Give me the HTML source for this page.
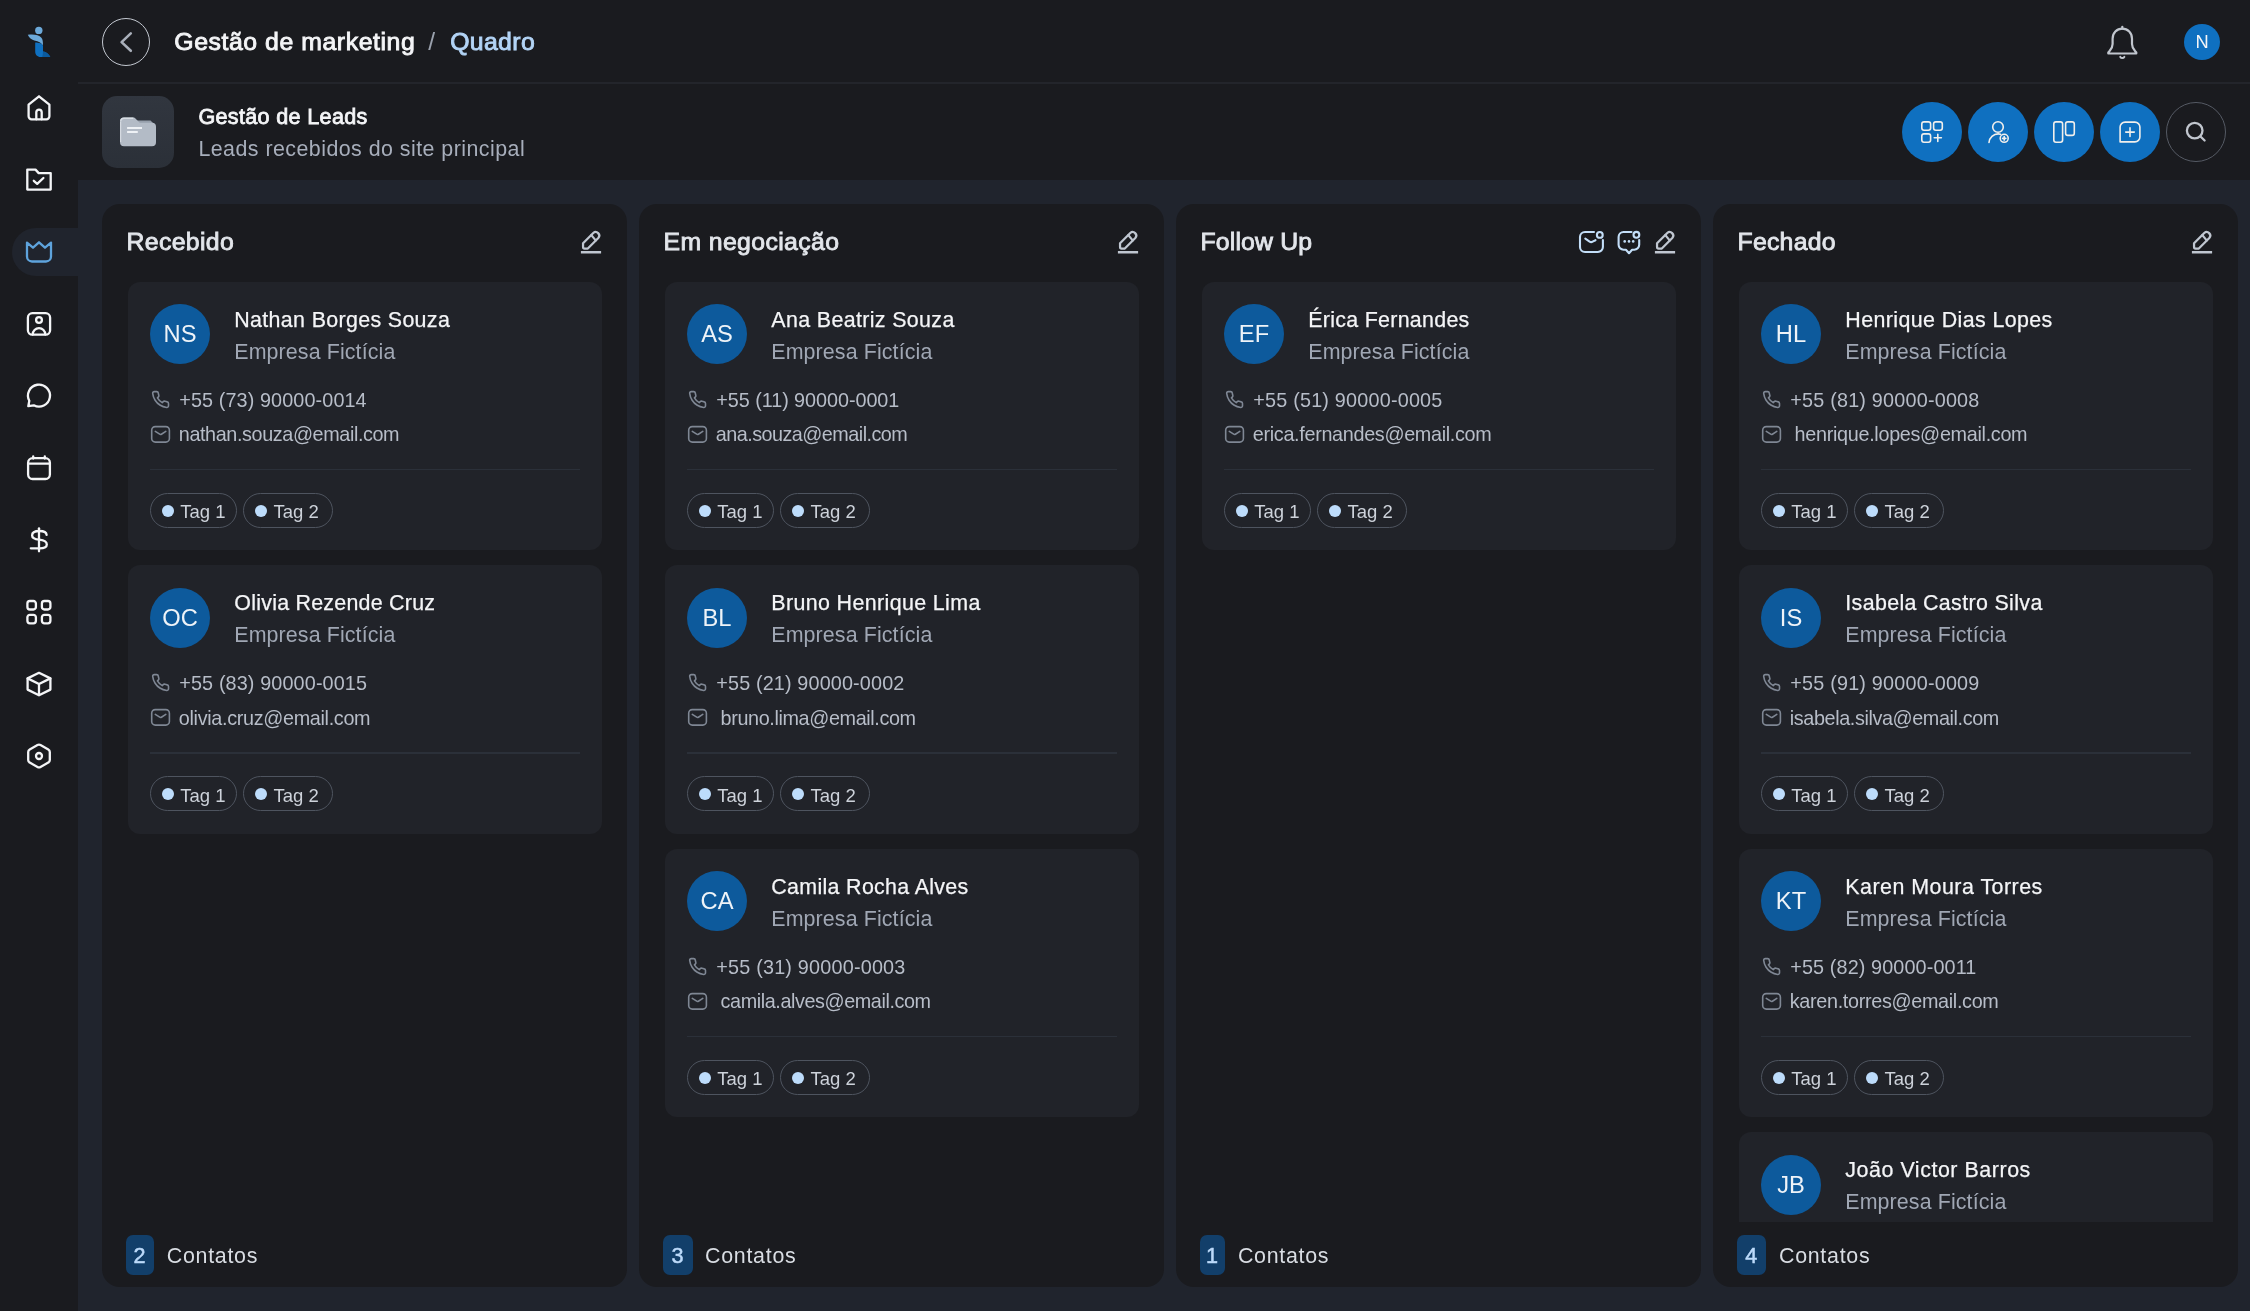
<!DOCTYPE html><html><head><meta charset="utf-8"><title>Quadro</title><style>
*{box-sizing:border-box;margin:0;padding:0}
html,body{width:2250px;height:1311px;overflow:hidden;background:#20242d;
 font-family:"Liberation Sans",sans-serif;-webkit-font-smoothing:antialiased}
.abs{position:absolute}
#app{position:absolute;left:0;top:0;width:2250px;height:1311px;will-change:transform}
#side{position:absolute;left:0;top:0;width:78px;height:1311px;background:#1a1b1f}
#top{position:absolute;left:78px;top:0;width:2172px;height:180px;background:#1a1b1f}
#hline{position:absolute;left:78px;top:82.4px;width:2172px;height:1.5px;background:#23252b}
.t{position:absolute;white-space:nowrap;line-height:1;transform:translateY(-100%);display:block}
svg{position:absolute;overflow:visible}
.col{position:absolute;top:204px;width:525px;height:1083px;background:#1a1b1f;border-radius:18px;overflow:hidden}
.card{position:absolute;left:25.5px;width:474px;height:268.5px;background:#212329;border-radius:12px}
.av{position:absolute;left:22.5px;top:22.8px;width:60px;height:60px;border-radius:50%;background:#0d5a9c}
  .div{position:absolute;left:22px;top:187px;width:430.5px;height:1.5px;background:#2b3039}
.tag{position:absolute;top:211.4px;height:35px;border:1.5px solid #4e545f;border-radius:17.5px}
.dot{position:absolute;top:10.7px;left:10.5px;width:12px;height:12px;border-radius:50%;background:#bddcfb}
.scroll{position:absolute;left:0;top:0;width:525px;height:1018px;overflow:hidden}
.badge{position:absolute;left:24px;top:1030.5px;width:29.5px;height:40.5px;border-radius:7px;background:#123f6a}
.btn{position:absolute;top:102px;width:60px;height:60px;border-radius:50%;background:#0f70c0}
.h1{font-size:24.8px;font-weight:normal;color:#f4f5f7;margin-top:4.81px}
.h1s{font-size:24.6px;font-weight:normal;color:#9aa1ad;margin-top:4.78px}
.h1q{font-size:24.8px;font-weight:normal;color:#b3d4f6;margin-top:4.81px}
.sub1{font-size:21.6px;font-weight:normal;color:#f4f5f7;margin-top:4.32px}
.sub2{font-size:21.4px;font-weight:normal;color:#a7aebb;margin-top:4.28px}
.ct{font-size:24.8px;font-weight:normal;color:#e3e6eb;margin-top:4.81px}
.nm{font-size:21.4px;font-weight:normal;color:#f4f5f7;margin-top:4.28px}
.co{font-size:21.4px;font-weight:normal;color:#a0a7b4;margin-top:4.28px}
.ph{font-size:19.8px;font-weight:normal;color:#b7bdc8;margin-top:4.04px}
.tg{font-size:18.5px;font-weight:normal;color:#cdd2da;margin-top:3.84px}
.ini{font-size:23.7px;font-weight:normal;color:#eef3f8;margin-top:4.64px}
.bd{font-size:21.6px;font-weight:normal;color:#bcdafa;margin-top:4.32px}
.ft{font-size:21.4px;font-weight:normal;color:#d9dde3;margin-top:4.28px}
.nav{font-size:18.3px;font-weight:normal;color:#f4f5f7;margin-top:3.81px}
.nm{-webkit-text-stroke:0.25px #f4f5f7}
.ct{-webkit-text-stroke:0.85px #e3e6eb}
.h1{-webkit-text-stroke:0.9px #f4f5f7}
.h1q{-webkit-text-stroke:0.9px #b3d4f6}
.sub1{-webkit-text-stroke:0.8px #f4f5f7}
.bd{-webkit-text-stroke:0.5px #bcdafa}
</style></head><body>
<div id="side"></div><div id="top"></div><div id="hline"></div><div id="app">
<!-- logo -->
<svg style="left:20px;top:20px" width="40" height="44" viewBox="20 20 40 44">
 <path d="M35.2 42.5c0 0 7.8 0 7.8 3.5v5.5c0 0 4.500 0.300 7.300 5.400H40.500c-3.200 0-5.300-2.300-5.300-5.500Z" fill="#0f70c0"/>
 <path d="M43 51.500c3 0.300 5.800 2.200 7.300 5.400H42.200c0.500-1.700 0.800-3.600 0.800-5.400Z" fill="#0b5a9d"/>
 <path d="M27.800 34.800c5.800-0.700 11.200 0 13.600 2.900 1.300 1.600 1.600 4.100 1.600 7.500-3-3.600-6.200-4.300-8.700-4.800-3.300-0.800-5.500-3-6.500-5.600Z" fill="#6ca9d9"/>
 <circle cx="38.800" cy="30.400" r="3.700" fill="#6ca9d9"/>
</svg>
<!-- active pill -->
<div class="abs" style="left:12px;top:228px;width:70px;height:48px;background:#20242d;border-radius:24px 0 0 24px"></div>
<!-- home -->
<svg style="left:21px;top:90px" width="36" height="36" viewBox="-18 -18 36 36" fill="none" stroke="#f4f5f7" stroke-width="2.3" stroke-linejoin="round" stroke-linecap="round">
 <path d="M0-11.700 10.400-3.400V8.300a3 3 0 0 1-3 3H-7.400a3 3 0 0 1-3-3V-3.400Z"/><path d="M-2.700 11.300V4.300a2.700 2.700 0 0 1 5.400 0v7"/></svg>
<!-- folder check -->
<svg style="left:21px;top:162px" width="36" height="36" viewBox="-18 -18 36 36" fill="none" stroke="#f4f5f7" stroke-width="2.3" stroke-linejoin="round" stroke-linecap="round">
 <path d="M-11.700-10.400H-3.500L-0.300-6.900H11.700V9.600H-11.700Z"/><path d="M-5.200 0.800-1.800 3.900 4.400-2"/></svg>
<!-- crown (active) -->
<svg style="left:21px;top:234px" width="36" height="36" viewBox="-18 -18 36 36" fill="none" stroke="#5ea3dc" stroke-width="2.3" stroke-linejoin="round" stroke-linecap="round">
 <path d="M-12-9.400-6-4.300 0-9.700 6-4.300 12-9.400V4.500a5 5 0 0 1-5 5H-7a5 5 0 0 1-5-5Z"/></svg>
<!-- user square -->
<svg style="left:21px;top:306px" width="36" height="36" viewBox="-18 -18 36 36" fill="none" stroke="#f4f5f7" stroke-width="2.3" stroke-linejoin="round" stroke-linecap="round">
 <rect x="-11.100" y="-10.800" width="22.200" height="21.500" rx="4.500"/><circle cx="0" cy="-4" r="2.900"/><path d="M-6.300 10.500a6.300 6.300 0 0 1 12.600 0"/></svg>
<!-- chat -->
<svg style="left:21px;top:378px" width="36" height="36" viewBox="-18 -18 36 36" fill="none" stroke="#f4f5f7" stroke-width="2.3" stroke-linejoin="round" stroke-linecap="round">
 <path d="M-5.200 9.300A11 11 0 1 0-9.700 4.800L-10.700 10.200Z"/></svg>
<!-- calendar -->
<svg style="left:21px;top:450px" width="36" height="36" viewBox="-18 -18 36 36" fill="none" stroke="#f4f5f7" stroke-width="2.3" stroke-linejoin="round" stroke-linecap="round">
 <rect x="-10.900" y="-9.800" width="21.800" height="20.800" rx="4.500"/><path d="M-10.900-4.300H10.900M-5.800-11.600v2.200M5.800-11.600v2.200"/></svg>
<!-- dollar -->
<svg style="left:21px;top:522px" width="36" height="36" viewBox="-18 -18 36 36" fill="none" stroke="#f4f5f7" stroke-width="2.300" stroke-linejoin="round" stroke-linecap="round">
 <path d="M0-11.700V11.300"/><path d="M7.600-5.200C7.400-8 4.600-9 0.500-9 -4-9-6.900-7.400-6.900-4.600-6.900-1.600-3.800-0.800 0.300-0.300 4.400 0.200 7.800 1.500 7.800 4.500 7.800 7.400 4.800 8.300 0.500 8.300H-8.200"/></svg>
<!-- grid -->
<svg style="left:21px;top:594px" width="36" height="36" viewBox="-18 -18 36 36" fill="none" stroke="#f4f5f7" stroke-width="2.300" stroke-linejoin="round">
 <rect x="-11.600" y="-11" width="8.500" height="8.500" rx="2.500"/><rect x="2.900" y="-11" width="8.500" height="8.500" rx="2.500"/><rect x="-11.600" y="2.800" width="8.500" height="8.500" rx="2.500"/><rect x="2.900" y="2.800" width="8.500" height="8.500" rx="2.500"/></svg>
<!-- box -->
<svg style="left:21px;top:666px" width="36" height="36" viewBox="-18 -18 36 36" fill="none" stroke="#f4f5f7" stroke-width="2.300" stroke-linejoin="round" stroke-linecap="round">
 <path d="M0-11.200 11.400-5.600V5.600L0 11.200-11.400 5.600V-5.600Z"/><path d="M-11.400-5.600 0 0 11.400-5.600M0 0V11.200"/></svg>
<!-- settings hex -->
<svg style="left:21px;top:738px" width="36" height="36" viewBox="-18 -18 36 36" fill="none" stroke="#f4f5f7" stroke-width="2.300" stroke-linejoin="round" stroke-linecap="round">
 <path d="M-1.500-11 -9.300-6.600a3 3 0 0 0-1.500 2.600V4a3 3 0 0 0 1.500 2.600L-1.500 11a3 3 0 0 0 3 0L9.300 6.600A3 3 0 0 0 10.800 4V-4A3 3 0 0 0 9.300-6.600L1.500-11a3 3 0 0 0-3 0Z"/><circle cx="0" cy="0" r="3"/></svg>
<!-- back button -->
<div class="abs" style="left:102px;top:18px;width:48px;height:48px;border-radius:50%;border:1.6px solid #c4c9d1"></div>
<svg style="left:102px;top:18px" width="48" height="48" viewBox="102 18 48 48" fill="none" stroke="#a9afba" stroke-width="2.600" stroke-linecap="round" stroke-linejoin="round"><path d="M130.800 33.400 121.600 42.100 130.800 50.800"/></svg>
<!-- bell -->
<svg style="left:2100px;top:20px" width="44" height="44" viewBox="2100 20 44 44" fill="none" stroke="#c1c6ce" stroke-width="2.200" stroke-linecap="round" stroke-linejoin="round">
 <path d="M2122.300 26.800v1.800"/>
 <path d="M2122.300 28.700c-5.600 0-9.700 4.300-9.700 10v5.200c0 2.600-1.200 5.100-3.200 7.300l-1.100 1.200v1.100h28v-1.100l-1.100-1.200c-2-2.200-3.200-4.700-3.200-7.300v-5.200c0-5.700-4.100-10-9.700-10Z"/>
 <path d="M2120.300 56.900a2.300 2.300 0 0 0 4 0" stroke-width="2"/></svg>
<!-- N avatar -->
<div class="abs" style="left:2184px;top:24px;width:36px;height:36px;border-radius:50%;background:#0f70c0"></div>
<span class="t nav" style="left:2184px;width:36px;text-align:center;top:47.300px">N</span>
<!-- folder box -->
<div class="abs" style="left:102px;top:96px;width:72px;height:72px;border-radius:15px;background:linear-gradient(#31363f,#2b3038)"></div>
<svg style="left:116px;top:112px" width="44" height="40" viewBox="116 112 44 40">
 <path d="M137 120.500h13.500l3.500 3.500v4h-17Z" fill="#97a0ac"/>
 <path d="M120 121.600a4 4 0 0 1 4-4h9.400a3 3 0 0 1 2.300 1.100l3.400 3.600a1.500 1.500 0 0 0 1.100 0.500h11.800a4 4 0 0 1 4 4v15.400a4 4 0 0 1-4 4h-28a4 4 0 0 1-4-4Z" fill="#b3bbc6"/>
 <path d="M120.700 121.600a3.300 3.300 0 0 1 3.300-3.300h9.400" stroke="#d8dde4" stroke-width="1.400" fill="none"/>
 <path d="M120.600 122v20" stroke="#d5dae1" stroke-width="1.200"/>
 <path d="M127.100 127.900h14.900M127.100 132.100h10.700" stroke="#eef1f5" stroke-width="2"/>
</svg>
<!-- action buttons -->
<div class="btn" style="left:1902px"></div><div class="btn" style="left:1968px"></div><div class="btn" style="left:2034px"></div><div class="btn" style="left:2100px"></div>
<div class="btn" style="left:2166px;background:none;border:1.600px solid #565b65"></div>
<svg style="left:1914px;top:114px" width="36" height="36" viewBox="-18 -18 36 36" fill="none" stroke="#f1efec" stroke-width="1.600" stroke-linecap="round" stroke-linejoin="round">
 <rect x="-10.200" y="-10.100" width="8.800" height="8.400" rx="2.200"/><rect x="1.600" y="-10.100" width="8.700" height="8.400" rx="2.200"/><rect x="-10.200" y="1.900" width="8.800" height="8.400" rx="2.200"/><path d="M2.200 5.800h7.200M5.800 2.200v7.200"/></svg>
<svg style="left:1980px;top:114px" width="36" height="36" viewBox="-18 -18 36 36" fill="none" stroke="#f1efec" stroke-width="1.600" stroke-linecap="round" stroke-linejoin="round">
 <circle cx="0" cy="-5" r="5.300"/><path d="M-9 10.500a9.300 9.300 0 0 1 9.300-8.600c0.800 0 1.500 0.100 2.200 0.300"/><circle cx="6.200" cy="6.300" r="4"/><path d="M4.600 6.300h3.200M6.200 4.700v3.200" stroke-width="1.700"/></svg>
<svg style="left:2046px;top:114px" width="36" height="36" viewBox="-18 -18 36 36" fill="none" stroke="#f1efec" stroke-width="1.600" stroke-linecap="round" stroke-linejoin="round">
 <rect x="-10.200" y="-10.100" width="8.800" height="20.300" rx="2.200"/><rect x="1.600" y="-10.100" width="8.700" height="13.500" rx="2.200"/></svg>
<svg style="left:2112px;top:114px" width="36" height="36" viewBox="-18 -18 36 36" fill="none" stroke="#f1efec" stroke-width="1.600" stroke-linecap="round" stroke-linejoin="round">
 <path d="M-4.900-9.900H4.900a5 5 0 0 1 5 5V4.900a5 5 0 0 1-5 5H-9.900V-4.900a5 5 0 0 1 5-5Z"/><path d="M-4.300 0.100h8.600M0-4.200v8.600"/></svg>
<svg style="left:2178px;top:114px" width="36" height="36" viewBox="-18 -18 36 36" fill="none" stroke="#c1c6ce" stroke-width="2.300" stroke-linecap="round" stroke-linejoin="round">
 <circle cx="-1.300" cy="-1.400" r="7.800"/><path d="M4.500 4.500 8.600 8.500"/></svg>
<span id="h1a" class="t h1" style="left:174.3px;top:50.4px;letter-spacing:0.567px;">Gestão de marketing</span>
<span id="h1b" class="t h1s" style="left:428.3px;top:50.4px;letter-spacing:0.000px;">/</span>
<span id="h1c" class="t h1q" style="left:450.2px;top:50.4px;letter-spacing:0.356px;">Quadro</span>
<span id="s1" class="t sub1" style="left:198.4px;top:123.3px;letter-spacing:0.323px;">Gestão de Leads</span>
<span id="s2" class="t sub2" style="left:198.4px;top:155.8px;letter-spacing:0.461px;">Leads recebidos do site principal</span>
<div class="col" style="left:102px">
<span id="c0t" class="t ct" style="left:24.5px;top:46.3px;letter-spacing:0.360px;">Recebido</span>
<svg style="left:478px;top:26px" width="24" height="24" viewBox="0 0 24 24" fill="none" stroke="#bfc6d0" stroke-width="2.250" stroke-linejoin="round" stroke-linecap="round"><path d="M3.050 13.200 13.260 3a3.570 3.570 0 0 1 5.040 5.040L7.800 18.550H4.550a1.500 1.500 0 0 1-1.500-1.500Z"/><path d="M11.300 5.100C12.500 6.500 14.500 9 15.800 10.400"/><path d="M0.900 22.200H21.100" stroke-linecap="butt" stroke-width="2.400"/></svg>
<div class="scroll">
<div class="card" style="top:77.5px">
<div class="av"></div>
<span class="t ini" style="left:22.5px;width:60px;text-align:center;top:61.2px">NS</span>
<span id="c0k0n" class="t nm" style="left:106.8px;top:45.1px;letter-spacing:0.345px;">Nathan Borges Souza</span>
<span id="c0k0c" class="t co" style="left:106.8px;top:76.9px;letter-spacing:0.115px;">Empresa Fictícia</span>
<svg style="left:23.350px;top:108.150px" width="19.100" height="19.100" viewBox="0 0 24 24" fill="none" stroke="#7f8794" stroke-width="2" stroke-linecap="round" stroke-linejoin="round"><path d="M22 16.920v3a2 2 0 0 1-2.180 2 19.790 19.790 0 0 1-8.630-3.070 19.500 19.500 0 0 1-6-6 19.790 19.790 0 0 1-3.070-8.670A2 2 0 0 1 4.110 2h3a2 2 0 0 1 2 1.720 12.840 12.840 0 0 0 .7 2.810 2 2 0 0 1-.45 2.110L8.090 9.910a16 16 0 0 0 6 6l1.270-1.270a2 2 0 0 1 2.110-.45 12.840 12.840 0 0 0 2.810.7A2 2 0 0 1 22 16.920z"/></svg>
<span id="c0k0p" class="t ph" style="left:51.8px;top:125.2px;letter-spacing:0.110px;">+55 (73) 90000-0014</span>
<svg style="left:20px;top:140px" width="26" height="24" viewBox="20 140 26 24" fill="none" stroke="#7f8794" stroke-width="1.600" stroke-linecap="round" stroke-linejoin="round"><rect x="23.700" y="144.600" width="17.700" height="15.500" rx="3.600"/><path d="M27.300 149.400 31.700 152.200a1.600 1.600 0 0 0 1.700 0L37.800 149.400"/></svg>
<span id="c0k0e" class="t ph" style="left:51.3px;top:159.9px;letter-spacing:-0.391px;">nathan.souza@email.com</span>
<div class="div"></div>
<div class="tag" style="left:22.5px;width:86.7px"><div class="dot"></div><span id="c0k0t1" class="t tg" style="left:29.3px;top:23.3px;letter-spacing:0.000px;">Tag 1</span></div>
<div class="tag" style="left:115.7px;width:89.5px"><div class="dot"></div><span id="c0k0t2" class="t tg" style="left:29.3px;top:23.3px;letter-spacing:0.000px;">Tag 2</span></div>
</div>
<div class="card" style="top:361.0px">
<div class="av"></div>
<span class="t ini" style="left:22.5px;width:60px;text-align:center;top:61.2px">OC</span>
<span id="c0k1n" class="t nm" style="left:106.8px;top:45.1px;letter-spacing:0.252px;">Olivia Rezende Cruz</span>
<span id="c0k1c" class="t co" style="left:106.8px;top:76.9px;letter-spacing:0.115px;">Empresa Fictícia</span>
<svg style="left:23.350px;top:108.150px" width="19.100" height="19.100" viewBox="0 0 24 24" fill="none" stroke="#7f8794" stroke-width="2" stroke-linecap="round" stroke-linejoin="round"><path d="M22 16.920v3a2 2 0 0 1-2.180 2 19.790 19.790 0 0 1-8.630-3.070 19.500 19.500 0 0 1-6-6 19.790 19.790 0 0 1-3.070-8.670A2 2 0 0 1 4.110 2h3a2 2 0 0 1 2 1.720 12.840 12.840 0 0 0 .7 2.810 2 2 0 0 1-.45 2.110L8.090 9.910a16 16 0 0 0 6 6l1.270-1.270a2 2 0 0 1 2.110-.45 12.840 12.840 0 0 0 2.810.7A2 2 0 0 1 22 16.920z"/></svg>
<span id="c0k1p" class="t ph" style="left:51.8px;top:125.2px;letter-spacing:0.132px;">+55 (83) 90000-0015</span>
<svg style="left:20px;top:140px" width="26" height="24" viewBox="20 140 26 24" fill="none" stroke="#7f8794" stroke-width="1.600" stroke-linecap="round" stroke-linejoin="round"><rect x="23.700" y="144.600" width="17.700" height="15.500" rx="3.600"/><path d="M27.300 149.400 31.700 152.200a1.600 1.600 0 0 0 1.700 0L37.800 149.400"/></svg>
<span id="c0k1e" class="t ph" style="left:51.3px;top:159.9px;letter-spacing:-0.319px;">olivia.cruz@email.com</span>
<div class="div"></div>
<div class="tag" style="left:22.5px;width:86.7px"><div class="dot"></div><span id="c0k1t1" class="t tg" style="left:29.3px;top:23.3px;letter-spacing:0.000px;">Tag 1</span></div>
<div class="tag" style="left:115.7px;width:89.5px"><div class="dot"></div><span id="c0k1t2" class="t tg" style="left:29.3px;top:23.3px;letter-spacing:0.000px;">Tag 2</span></div>
</div>
</div>
<div class="badge" style="width:28px"></div>
<span class="t bd" style="left:23.5px;width:28px;text-align:center;top:1058.6px">2</span>
<span id="c0f" class="t ft" style="left:64.8px;top:1058.4px;letter-spacing:0.711px;">Contatos</span>
</div>
<div class="col" style="left:639px">
<span id="c1t" class="t ct" style="left:24.5px;top:46.3px;letter-spacing:0.380px;">Em negociação</span>
<svg style="left:478px;top:26px" width="24" height="24" viewBox="0 0 24 24" fill="none" stroke="#bfc6d0" stroke-width="2.250" stroke-linejoin="round" stroke-linecap="round"><path d="M3.050 13.200 13.260 3a3.570 3.570 0 0 1 5.040 5.040L7.800 18.550H4.550a1.500 1.500 0 0 1-1.500-1.500Z"/><path d="M11.300 5.100C12.500 6.500 14.500 9 15.800 10.400"/><path d="M0.900 22.200H21.100" stroke-linecap="butt" stroke-width="2.400"/></svg>
<div class="scroll">
<div class="card" style="top:77.5px">
<div class="av"></div>
<span class="t ini" style="left:22.5px;width:60px;text-align:center;top:61.2px">AS</span>
<span id="c1k0n" class="t nm" style="left:106.8px;top:45.1px;letter-spacing:0.363px;">Ana Beatriz Souza</span>
<span id="c1k0c" class="t co" style="left:106.8px;top:76.9px;letter-spacing:0.115px;">Empresa Fictícia</span>
<svg style="left:23.350px;top:108.150px" width="19.100" height="19.100" viewBox="0 0 24 24" fill="none" stroke="#7f8794" stroke-width="2" stroke-linecap="round" stroke-linejoin="round"><path d="M22 16.920v3a2 2 0 0 1-2.180 2 19.790 19.790 0 0 1-8.630-3.070 19.500 19.500 0 0 1-6-6 19.790 19.790 0 0 1-3.070-8.670A2 2 0 0 1 4.110 2h3a2 2 0 0 1 2 1.720 12.840 12.840 0 0 0 .7 2.810 2 2 0 0 1-.45 2.110L8.090 9.910a16 16 0 0 0 6 6l1.270-1.270a2 2 0 0 1 2.110-.45 12.840 12.840 0 0 0 2.810.7A2 2 0 0 1 22 16.920z"/></svg>
<span id="c1k0p" class="t ph" style="left:51.8px;top:125.2px;letter-spacing:-0.048px;">+55 (11) 90000-0001</span>
<svg style="left:20px;top:140px" width="26" height="24" viewBox="20 140 26 24" fill="none" stroke="#7f8794" stroke-width="1.600" stroke-linecap="round" stroke-linejoin="round"><rect x="23.700" y="144.600" width="17.700" height="15.500" rx="3.600"/><path d="M27.300 149.400 31.700 152.200a1.600 1.600 0 0 0 1.700 0L37.800 149.400"/></svg>
<span id="c1k0e" class="t ph" style="left:51.3px;top:159.9px;letter-spacing:-0.529px;">ana.souza@email.com</span>
<div class="div"></div>
<div class="tag" style="left:22.5px;width:86.7px"><div class="dot"></div><span id="c1k0t1" class="t tg" style="left:29.3px;top:23.3px;letter-spacing:0.000px;">Tag 1</span></div>
<div class="tag" style="left:115.7px;width:89.5px"><div class="dot"></div><span id="c1k0t2" class="t tg" style="left:29.3px;top:23.3px;letter-spacing:0.000px;">Tag 2</span></div>
</div>
<div class="card" style="top:361.0px">
<div class="av"></div>
<span class="t ini" style="left:22.5px;width:60px;text-align:center;top:61.2px">BL</span>
<span id="c1k1n" class="t nm" style="left:106.8px;top:45.1px;letter-spacing:0.381px;">Bruno Henrique Lima</span>
<span id="c1k1c" class="t co" style="left:106.8px;top:76.9px;letter-spacing:0.115px;">Empresa Fictícia</span>
<svg style="left:23.350px;top:108.150px" width="19.100" height="19.100" viewBox="0 0 24 24" fill="none" stroke="#7f8794" stroke-width="2" stroke-linecap="round" stroke-linejoin="round"><path d="M22 16.920v3a2 2 0 0 1-2.180 2 19.790 19.790 0 0 1-8.630-3.070 19.500 19.500 0 0 1-6-6 19.790 19.790 0 0 1-3.070-8.670A2 2 0 0 1 4.110 2h3a2 2 0 0 1 2 1.720 12.840 12.840 0 0 0 .7 2.810 2 2 0 0 1-.45 2.110L8.090 9.910a16 16 0 0 0 6 6l1.270-1.270a2 2 0 0 1 2.110-.45 12.840 12.840 0 0 0 2.810.7A2 2 0 0 1 22 16.920z"/></svg>
<span id="c1k1p" class="t ph" style="left:51.8px;top:125.2px;letter-spacing:0.148px;">+55 (21) 90000-0002</span>
<svg style="left:20px;top:140px" width="26" height="24" viewBox="20 140 26 24" fill="none" stroke="#7f8794" stroke-width="1.600" stroke-linecap="round" stroke-linejoin="round"><rect x="23.700" y="144.600" width="17.700" height="15.500" rx="3.600"/><path d="M27.300 149.400 31.700 152.200a1.600 1.600 0 0 0 1.700 0L37.800 149.400"/></svg>
<span id="c1k1e" class="t ph" style="left:56.099999999999994px;top:159.9px;letter-spacing:-0.373px;">bruno.lima@email.com</span>
<div class="div"></div>
<div class="tag" style="left:22.5px;width:86.7px"><div class="dot"></div><span id="c1k1t1" class="t tg" style="left:29.3px;top:23.3px;letter-spacing:0.000px;">Tag 1</span></div>
<div class="tag" style="left:115.7px;width:89.5px"><div class="dot"></div><span id="c1k1t2" class="t tg" style="left:29.3px;top:23.3px;letter-spacing:0.000px;">Tag 2</span></div>
</div>
<div class="card" style="top:644.5px">
<div class="av"></div>
<span class="t ini" style="left:22.5px;width:60px;text-align:center;top:61.2px">CA</span>
<span id="c1k2n" class="t nm" style="left:106.8px;top:45.1px;letter-spacing:0.328px;">Camila Rocha Alves</span>
<span id="c1k2c" class="t co" style="left:106.8px;top:76.9px;letter-spacing:0.115px;">Empresa Fictícia</span>
<svg style="left:23.350px;top:108.150px" width="19.100" height="19.100" viewBox="0 0 24 24" fill="none" stroke="#7f8794" stroke-width="2" stroke-linecap="round" stroke-linejoin="round"><path d="M22 16.920v3a2 2 0 0 1-2.180 2 19.790 19.790 0 0 1-8.630-3.070 19.500 19.500 0 0 1-6-6 19.790 19.790 0 0 1-3.070-8.670A2 2 0 0 1 4.110 2h3a2 2 0 0 1 2 1.720 12.840 12.840 0 0 0 .7 2.810 2 2 0 0 1-.45 2.110L8.090 9.910a16 16 0 0 0 6 6l1.270-1.270a2 2 0 0 1 2.110-.45 12.840 12.840 0 0 0 2.810.7A2 2 0 0 1 22 16.920z"/></svg>
<span id="c1k2p" class="t ph" style="left:51.8px;top:125.2px;letter-spacing:0.204px;">+55 (31) 90000-0003</span>
<svg style="left:20px;top:140px" width="26" height="24" viewBox="20 140 26 24" fill="none" stroke="#7f8794" stroke-width="1.600" stroke-linecap="round" stroke-linejoin="round"><rect x="23.700" y="144.600" width="17.700" height="15.500" rx="3.600"/><path d="M27.300 149.400 31.700 152.200a1.600 1.600 0 0 0 1.700 0L37.800 149.400"/></svg>
<span id="c1k2e" class="t ph" style="left:56.099999999999994px;top:159.9px;letter-spacing:-0.408px;">camila.alves@email.com</span>
<div class="div"></div>
<div class="tag" style="left:22.5px;width:86.7px"><div class="dot"></div><span id="c1k2t1" class="t tg" style="left:29.3px;top:23.3px;letter-spacing:0.000px;">Tag 1</span></div>
<div class="tag" style="left:115.7px;width:89.5px"><div class="dot"></div><span id="c1k2t2" class="t tg" style="left:29.3px;top:23.3px;letter-spacing:0.000px;">Tag 2</span></div>
</div>
</div>
<div class="badge" style="width:29.8px"></div>
<span class="t bd" style="left:23.5px;width:29.8px;text-align:center;top:1058.6px">3</span>
<span id="c1f" class="t ft" style="left:66.1px;top:1058.4px;letter-spacing:0.711px;">Contatos</span>
</div>
<div class="col" style="left:1176px">
<span id="c2t" class="t ct" style="left:24.5px;top:46.3px;letter-spacing:0.156px;">Follow Up</span>
<svg style="left:478px;top:26px" width="24" height="24" viewBox="0 0 24 24" fill="none" stroke="#bfc6d0" stroke-width="2.250" stroke-linejoin="round" stroke-linecap="round"><path d="M3.050 13.200 13.260 3a3.570 3.570 0 0 1 5.040 5.040L7.800 18.550H4.550a1.500 1.500 0 0 1-1.500-1.500Z"/><path d="M11.300 5.100C12.500 6.500 14.500 9 15.800 10.400"/><path d="M0.900 22.200H21.100" stroke-linecap="butt" stroke-width="2.400"/></svg>
<svg style="left:400px;top:24px" width="72" height="32" viewBox="1576 228 72 32" fill="none" stroke="#c3def8" stroke-width="2.100" stroke-linecap="round" stroke-linejoin="round">
 <path d="M1594 232h-9a5 5 0 0 0-5 5v10a5 5 0 0 0 5 5h12.900a5 5 0 0 0 5-5V240"/><path d="M1585.300 238.700 1589.600 241.600a2.600 2.600 0 0 0 3 0L1595.500 240.200"/><circle cx="1599.800" cy="234.900" r="2.900"/>
 <path d="M1631.500 232h-7.900a5 5 0 0 0-5 5v7.800a5 5 0 0 0 5 5h2.300l3.100 3.400 3.100-3.400h2.100a5 5 0 0 0 5-5V240"/><circle cx="1636.400" cy="234.800" r="2.900"/>
 <circle cx="1624.700" cy="241.400" r="1.300" fill="#c3def8" stroke="none"/><circle cx="1629" cy="241.400" r="1.300" fill="#c3def8" stroke="none"/><circle cx="1633.200" cy="241.400" r="1.300" fill="#c3def8" stroke="none"/>
</svg>
<div class="scroll">
<div class="card" style="top:77.5px">
<div class="av"></div>
<span class="t ini" style="left:22.5px;width:60px;text-align:center;top:61.2px">EF</span>
<span id="c2k0n" class="t nm" style="left:106.8px;top:45.1px;letter-spacing:0.289px;">Érica Fernandes</span>
<span id="c2k0c" class="t co" style="left:106.8px;top:76.9px;letter-spacing:0.115px;">Empresa Fictícia</span>
<svg style="left:23.350px;top:108.150px" width="19.100" height="19.100" viewBox="0 0 24 24" fill="none" stroke="#7f8794" stroke-width="2" stroke-linecap="round" stroke-linejoin="round"><path d="M22 16.920v3a2 2 0 0 1-2.180 2 19.790 19.790 0 0 1-8.630-3.070 19.500 19.500 0 0 1-6-6 19.790 19.790 0 0 1-3.070-8.670A2 2 0 0 1 4.110 2h3a2 2 0 0 1 2 1.720 12.840 12.840 0 0 0 .7 2.810 2 2 0 0 1-.45 2.110L8.090 9.910a16 16 0 0 0 6 6l1.270-1.270a2 2 0 0 1 2.110-.45 12.840 12.840 0 0 0 2.810.7A2 2 0 0 1 22 16.920z"/></svg>
<span id="c2k0p" class="t ph" style="left:51.8px;top:125.2px;letter-spacing:0.204px;">+55 (51) 90000-0005</span>
<svg style="left:20px;top:140px" width="26" height="24" viewBox="20 140 26 24" fill="none" stroke="#7f8794" stroke-width="1.600" stroke-linecap="round" stroke-linejoin="round"><rect x="23.700" y="144.600" width="17.700" height="15.500" rx="3.600"/><path d="M27.300 149.400 31.700 152.200a1.600 1.600 0 0 0 1.700 0L37.800 149.400"/></svg>
<span id="c2k0e" class="t ph" style="left:51.3px;top:159.9px;letter-spacing:-0.316px;">erica.fernandes@email.com</span>
<div class="div"></div>
<div class="tag" style="left:22.5px;width:86.7px"><div class="dot"></div><span id="c2k0t1" class="t tg" style="left:29.3px;top:23.3px;letter-spacing:0.000px;">Tag 1</span></div>
<div class="tag" style="left:115.7px;width:89.5px"><div class="dot"></div><span id="c2k0t2" class="t tg" style="left:29.3px;top:23.3px;letter-spacing:0.000px;">Tag 2</span></div>
</div>
</div>
<div class="badge" style="width:25.1px"></div>
<span class="t bd" style="left:23.5px;width:25.1px;text-align:center;top:1058.6px">1</span>
<span id="c2f" class="t ft" style="left:61.9px;top:1058.4px;letter-spacing:0.711px;">Contatos</span>
</div>
<div class="col" style="left:1713px">
<span id="c3t" class="t ct" style="left:24.5px;top:46.3px;letter-spacing:0.250px;">Fechado</span>
<svg style="left:478px;top:26px" width="24" height="24" viewBox="0 0 24 24" fill="none" stroke="#bfc6d0" stroke-width="2.250" stroke-linejoin="round" stroke-linecap="round"><path d="M3.050 13.200 13.260 3a3.570 3.570 0 0 1 5.040 5.040L7.800 18.550H4.550a1.500 1.500 0 0 1-1.500-1.500Z"/><path d="M11.300 5.100C12.500 6.500 14.500 9 15.800 10.400"/><path d="M0.900 22.200H21.100" stroke-linecap="butt" stroke-width="2.400"/></svg>
<div class="scroll">
<div class="card" style="top:77.5px">
<div class="av"></div>
<span class="t ini" style="left:22.5px;width:60px;text-align:center;top:61.2px">HL</span>
<span id="c3k0n" class="t nm" style="left:106.8px;top:45.1px;letter-spacing:0.402px;">Henrique Dias Lopes</span>
<span id="c3k0c" class="t co" style="left:106.8px;top:76.9px;letter-spacing:0.115px;">Empresa Fictícia</span>
<svg style="left:23.350px;top:108.150px" width="19.100" height="19.100" viewBox="0 0 24 24" fill="none" stroke="#7f8794" stroke-width="2" stroke-linecap="round" stroke-linejoin="round"><path d="M22 16.920v3a2 2 0 0 1-2.180 2 19.790 19.790 0 0 1-8.630-3.070 19.500 19.500 0 0 1-6-6 19.790 19.790 0 0 1-3.070-8.670A2 2 0 0 1 4.110 2h3a2 2 0 0 1 2 1.720 12.840 12.840 0 0 0 .7 2.810 2 2 0 0 1-.45 2.110L8.090 9.910a16 16 0 0 0 6 6l1.270-1.270a2 2 0 0 1 2.110-.45 12.840 12.840 0 0 0 2.810.7A2 2 0 0 1 22 16.920z"/></svg>
<span id="c3k0p" class="t ph" style="left:51.8px;top:125.2px;letter-spacing:0.204px;">+55 (81) 90000-0008</span>
<svg style="left:20px;top:140px" width="26" height="24" viewBox="20 140 26 24" fill="none" stroke="#7f8794" stroke-width="1.600" stroke-linecap="round" stroke-linejoin="round"><rect x="23.700" y="144.600" width="17.700" height="15.500" rx="3.600"/><path d="M27.300 149.400 31.700 152.200a1.600 1.600 0 0 0 1.700 0L37.800 149.400"/></svg>
<span id="c3k0e" class="t ph" style="left:56.099999999999994px;top:159.9px;letter-spacing:-0.304px;">henrique.lopes@email.com</span>
<div class="div"></div>
<div class="tag" style="left:22.5px;width:86.7px"><div class="dot"></div><span id="c3k0t1" class="t tg" style="left:29.3px;top:23.3px;letter-spacing:0.000px;">Tag 1</span></div>
<div class="tag" style="left:115.7px;width:89.5px"><div class="dot"></div><span id="c3k0t2" class="t tg" style="left:29.3px;top:23.3px;letter-spacing:0.000px;">Tag 2</span></div>
</div>
<div class="card" style="top:361.0px">
<div class="av"></div>
<span class="t ini" style="left:22.5px;width:60px;text-align:center;top:61.2px">IS</span>
<span id="c3k1n" class="t nm" style="left:106.8px;top:45.1px;letter-spacing:0.356px;">Isabela Castro Silva</span>
<span id="c3k1c" class="t co" style="left:106.8px;top:76.9px;letter-spacing:0.115px;">Empresa Fictícia</span>
<svg style="left:23.350px;top:108.150px" width="19.100" height="19.100" viewBox="0 0 24 24" fill="none" stroke="#7f8794" stroke-width="2" stroke-linecap="round" stroke-linejoin="round"><path d="M22 16.920v3a2 2 0 0 1-2.180 2 19.790 19.790 0 0 1-8.630-3.070 19.500 19.500 0 0 1-6-6 19.790 19.790 0 0 1-3.070-8.670A2 2 0 0 1 4.110 2h3a2 2 0 0 1 2 1.720 12.840 12.840 0 0 0 .7 2.810 2 2 0 0 1-.45 2.110L8.090 9.910a16 16 0 0 0 6 6l1.270-1.270a2 2 0 0 1 2.110-.45 12.840 12.840 0 0 0 2.810.7A2 2 0 0 1 22 16.920z"/></svg>
<span id="c3k1p" class="t ph" style="left:51.8px;top:125.2px;letter-spacing:0.204px;">+55 (91) 90000-0009</span>
<svg style="left:20px;top:140px" width="26" height="24" viewBox="20 140 26 24" fill="none" stroke="#7f8794" stroke-width="1.600" stroke-linecap="round" stroke-linejoin="round"><rect x="23.700" y="144.600" width="17.700" height="15.500" rx="3.600"/><path d="M27.300 149.400 31.700 152.200a1.600 1.600 0 0 0 1.700 0L37.800 149.400"/></svg>
<span id="c3k1e" class="t ph" style="left:51.3px;top:159.9px;letter-spacing:-0.386px;">isabela.silva@email.com</span>
<div class="div"></div>
<div class="tag" style="left:22.5px;width:86.7px"><div class="dot"></div><span id="c3k1t1" class="t tg" style="left:29.3px;top:23.3px;letter-spacing:0.000px;">Tag 1</span></div>
<div class="tag" style="left:115.7px;width:89.5px"><div class="dot"></div><span id="c3k1t2" class="t tg" style="left:29.3px;top:23.3px;letter-spacing:0.000px;">Tag 2</span></div>
</div>
<div class="card" style="top:644.5px">
<div class="av"></div>
<span class="t ini" style="left:22.5px;width:60px;text-align:center;top:61.2px">KT</span>
<span id="c3k2n" class="t nm" style="left:106.8px;top:45.1px;letter-spacing:0.492px;">Karen Moura Torres</span>
<span id="c3k2c" class="t co" style="left:106.8px;top:76.9px;letter-spacing:0.115px;">Empresa Fictícia</span>
<svg style="left:23.350px;top:108.150px" width="19.100" height="19.100" viewBox="0 0 24 24" fill="none" stroke="#7f8794" stroke-width="2" stroke-linecap="round" stroke-linejoin="round"><path d="M22 16.920v3a2 2 0 0 1-2.180 2 19.790 19.790 0 0 1-8.630-3.070 19.500 19.500 0 0 1-6-6 19.790 19.790 0 0 1-3.070-8.670A2 2 0 0 1 4.110 2h3a2 2 0 0 1 2 1.720 12.840 12.840 0 0 0 .7 2.810 2 2 0 0 1-.45 2.110L8.090 9.910a16 16 0 0 0 6 6l1.270-1.270a2 2 0 0 1 2.110-.45 12.840 12.840 0 0 0 2.810.7A2 2 0 0 1 22 16.920z"/></svg>
<span id="c3k2p" class="t ph" style="left:51.8px;top:125.2px;letter-spacing:0.119px;">+55 (82) 90000-0011</span>
<svg style="left:20px;top:140px" width="26" height="24" viewBox="20 140 26 24" fill="none" stroke="#7f8794" stroke-width="1.600" stroke-linecap="round" stroke-linejoin="round"><rect x="23.700" y="144.600" width="17.700" height="15.500" rx="3.600"/><path d="M27.300 149.400 31.700 152.200a1.600 1.600 0 0 0 1.700 0L37.800 149.400"/></svg>
<span id="c3k2e" class="t ph" style="left:51.3px;top:159.9px;letter-spacing:-0.322px;">karen.torres@email.com</span>
<div class="div"></div>
<div class="tag" style="left:22.5px;width:86.7px"><div class="dot"></div><span id="c3k2t1" class="t tg" style="left:29.3px;top:23.3px;letter-spacing:0.000px;">Tag 1</span></div>
<div class="tag" style="left:115.7px;width:89.5px"><div class="dot"></div><span id="c3k2t2" class="t tg" style="left:29.3px;top:23.3px;letter-spacing:0.000px;">Tag 2</span></div>
</div>
<div class="card" style="top:928.0px">
<div class="av"></div>
<span class="t ini" style="left:22.5px;width:60px;text-align:center;top:61.2px">JB</span>
<span id="c3k3n" class="t nm" style="left:106.8px;top:45.1px;letter-spacing:0.554px;">João Victor Barros</span>
<span id="c3k3c" class="t co" style="left:106.8px;top:76.9px;letter-spacing:0.115px;">Empresa Fictícia</span>
<svg style="left:23.350px;top:108.150px" width="19.100" height="19.100" viewBox="0 0 24 24" fill="none" stroke="#7f8794" stroke-width="2" stroke-linecap="round" stroke-linejoin="round"><path d="M22 16.920v3a2 2 0 0 1-2.180 2 19.790 19.790 0 0 1-8.630-3.070 19.500 19.500 0 0 1-6-6 19.790 19.790 0 0 1-3.070-8.670A2 2 0 0 1 4.110 2h3a2 2 0 0 1 2 1.720 12.840 12.840 0 0 0 .7 2.810 2 2 0 0 1-.45 2.110L8.090 9.910a16 16 0 0 0 6 6l1.270-1.270a2 2 0 0 1 2.110-.45 12.840 12.840 0 0 0 2.810.7A2 2 0 0 1 22 16.920z"/></svg>
<span id="c3k3p" class="t ph" style="left:51.8px;top:125.2px;letter-spacing:0.093px;">+55 (84) 90000-0012</span>
<svg style="left:20px;top:140px" width="26" height="24" viewBox="20 140 26 24" fill="none" stroke="#7f8794" stroke-width="1.600" stroke-linecap="round" stroke-linejoin="round"><rect x="23.700" y="144.600" width="17.700" height="15.500" rx="3.600"/><path d="M27.300 149.400 31.700 152.200a1.600 1.600 0 0 0 1.700 0L37.800 149.400"/></svg>
<span id="c3k3e" class="t ph" style="left:51.3px;top:159.9px;letter-spacing:-0.459px;">joao.barros@email.com</span>
<div class="div"></div>
<div class="tag" style="left:22.5px;width:86.7px"><div class="dot"></div><span id="c3k3t1" class="t tg" style="left:29.3px;top:23.3px;letter-spacing:0.000px;">Tag 1</span></div>
<div class="tag" style="left:115.7px;width:89.5px"><div class="dot"></div><span id="c3k3t2" class="t tg" style="left:29.3px;top:23.3px;letter-spacing:0.000px;">Tag 2</span></div>
</div>
</div>
<div class="badge" style="width:29.4px"></div>
<span class="t bd" style="left:23.5px;width:29.4px;text-align:center;top:1058.6px">4</span>
<span id="c3f" class="t ft" style="left:66.0px;top:1058.4px;letter-spacing:0.711px;">Contatos</span>
</div>
</div></body></html>
